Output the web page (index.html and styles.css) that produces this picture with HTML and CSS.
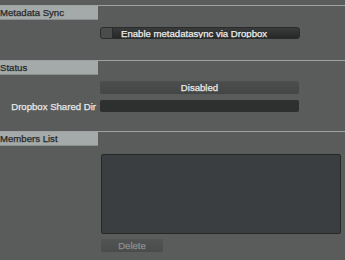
FILE: index.html
```html
<!DOCTYPE html>
<html>
<head>
<meta charset="utf-8">
<link rel="stylesheet" href="styles.css">
</head>
<body>
<div class="page">
  <section class="section s-meta">
    <div class="header">Metadata Sync</div>
    <div class="row row-check">
      <div class="label"></div>
      <div class="check-btn"><span class="box"></span><span class="check-text">Enable metadatasync via Dropbox</span></div>
    </div>
  </section>
  <section class="section s-status">
    <div class="header">Status</div>
    <div class="row row-status">
      <div class="label"></div>
      <div class="status-bar">Disabled</div>
    </div>
    <div class="row row-dir">
      <div class="label">Dropbox Shared Dir</div>
      <div class="input"></div>
    </div>
  </section>
  <section class="section s-members">
    <div class="header">Members List</div>
    <div class="row row-list">
      <div class="label"></div>
      <div class="list"></div>
    </div>
    <div class="row row-del">
      <div class="label"></div>
      <div class="del-btn">Delete</div>
    </div>
  </section>
</div>
</body>
</html>
```
FILE: styles.css
```css
html, body {
  margin: 0;
  padding: 0;
  background: #5a5b5b;
  width: 345px;
  height: 260px;
  overflow: hidden;
  font-family: "Liberation Sans", Arial, sans-serif;
  font-size: 9.6px;
  -webkit-text-stroke: 0.25px currentColor;
}
.page {
  padding-top: 5px;
  display: flex;
  flex-direction: column;
}
.section {
  border-top: 1px solid #9ea2a2;
  display: flex;
  flex-direction: column;
}
.s-meta { height: 54px; }
.s-status { height: 70px; }
.header {
  width: 98px;
  height: 14px;
  line-height: 13px;
  background: #a4a9a9;
  color: #262828;
  white-space: nowrap;
  overflow: hidden;
  border-bottom: 1px solid #8a8e8e;
  box-sizing: border-box;
}
.row {
  display: flex;
  align-items: center;
}
.label {
  width: 100px;
  flex: none;
  text-align: right;
  padding-right: 4px;
  box-sizing: border-box;
  color: #e6e8e8;
  white-space: nowrap;
}
.row-check { margin-top: 7px; }
.check-btn {
  width: 200px;
  height: 12px;
  border-radius: 3px;
  background: linear-gradient(#3a3c3c, #262828);
  border: 1px solid #2a2c2c;
  box-sizing: border-box;
  display: flex;
  align-items: center;
  overflow: hidden;
}
.box {
  width: 11px;
  height: 10px;
  background: #4a4c4c;
  border-right: 1px solid #2a2c2c;
  flex: none;
}
.check-text {
  color: #eceeee;
  margin-left: 8px;
  white-space: nowrap;
}
.row-status { margin-top: 6px; }
.status-bar {
  width: 199px;
  height: 13px;
  line-height: 13px;
  border-radius: 2px;
  background: linear-gradient(#4d4f4f, #444646);
  color: #e8eaea;
  text-align: center;
}
.row-dir { margin-top: 6px; }
.input {
  width: 199px;
  height: 12px;
  border-radius: 2px;
  background: #2e3030;
}
.row-list { margin-top: 8px; }
.list {
  width: 240px;
  height: 80px;
  margin-left: 1px;
  background: #3a3e40;
  border: 1px solid #262828;
  border-radius: 2px;
  box-sizing: border-box;
}
.row-del { margin-top: 5px; }
.del-btn {
  margin-left: 1px;
  width: 62px;
  height: 13px;
  line-height: 13px;
  border-radius: 2px;
  background: linear-gradient(#525454, #4a4c4c);
  color: #8c8f8f;
  text-align: center;
}
```
